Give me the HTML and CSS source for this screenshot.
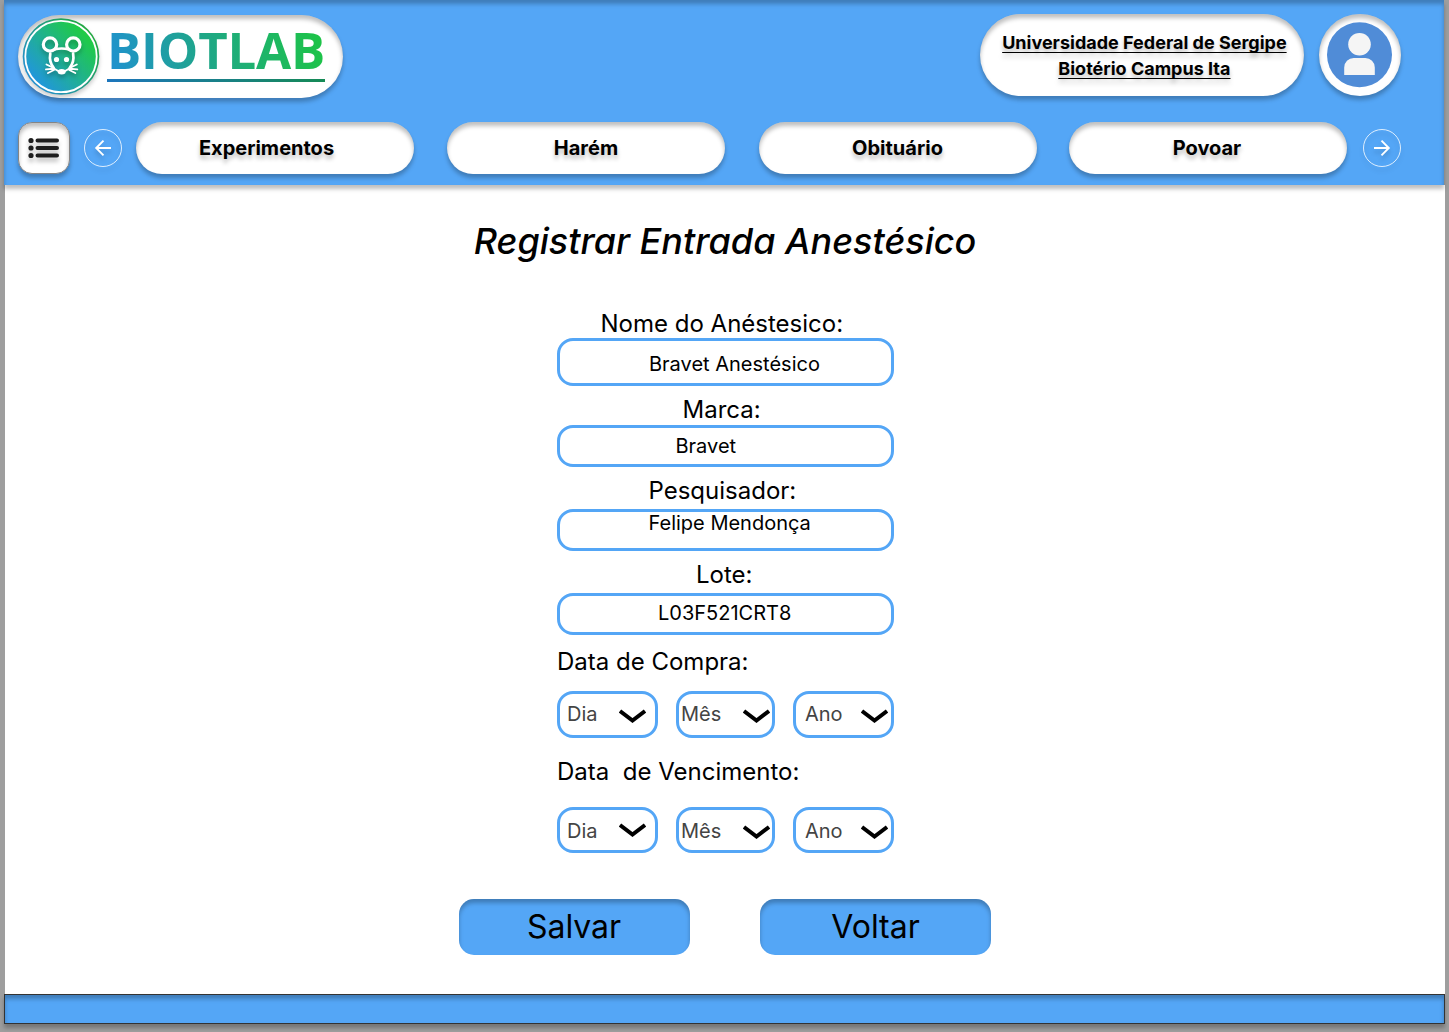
FILE: index.html
```html
<!DOCTYPE html>
<html lang="pt-BR">
<head>
<meta charset="utf-8">
<title>Biotlab - Registrar Entrada Anestésico</title>
<link rel="stylesheet" href="styles.css">
</head>
<body>
<header class="header">
  <div class="header-top">
    <div class="logo pill">
      <svg class="logo-mark" width="80" height="80" viewBox="0 0 80 80">
        <defs>
          <linearGradient id="mark" x1="0.15" y1="0.85" x2="0.85" y2="0.2">
            <stop offset="0" stop-color="#2196dc"/>
            <stop offset="1" stop-color="#1fcb45"/>
          </linearGradient>
          <linearGradient id="ring" x1="0.1" y1="0.8" x2="0.9" y2="0.2">
            <stop offset="0" stop-color="#2590cf"/>
            <stop offset="1" stop-color="#22a840"/>
          </linearGradient>
        </defs>
        <circle cx="40" cy="39.500" r="38.300" fill="url(#ring)"/>
        <circle cx="40" cy="39.500" r="35.700" fill="url(#mark)" stroke="#fff" stroke-width="1.800"/>
        <g class="mouse" fill="none" stroke="#fff" stroke-width="2.100" stroke-linecap="round">
          <path d="M34 32.300q6.700-1.600 13.400 0M29.300 36.500c-.9 5-.2 10 3.500 14.500M52.100 36.500c.9 5 .2 10-3.500 14.500" stroke-width="2.700"/>
          <circle cx="29" cy="27.500" r="6.700" stroke-width="3.200"/>
          <circle cx="52.300" cy="27.500" r="6.700" stroke-width="3.200"/>
          <path d="M25.500 47.500l7 3.300M25 52.400l7.500-.6M27 56l6-3M55.800 47.500l-7 3.300M56.300 52.400l-7.500-.6M54.300 56l-6-3M33 51.500l5 3M48.300 51.500l-5 3" stroke-width="1.900"/>
          <ellipse cx="40.700" cy="54.700" rx="4" ry="2.700" fill="#fff" stroke="none"/>
          <circle cx="35.500" cy="42.500" r="2.600" fill="#fff" stroke="none"/>
          <circle cx="45.500" cy="42.500" r="2.600" fill="#fff" stroke="none"/>
        </g>
      </svg>
      <span class="logo-name">BIOTLAB</span>
    </div>
    <div class="institution pill">
      <span>Universidade Federal de Sergipe</span>
      <span>Biotério Campus Ita</span>
    </div>
    <div class="avatar pill">
      <svg width="66" height="66" viewBox="0 0 66 66">
        <circle cx="32.500" cy="32.800" r="32.500" fill="#508cd7"/>
        <circle cx="32.500" cy="22.300" r="11.300" fill="#f5f5f5"/>
        <path d="M17.200 52.900V45.500a9.500 9.500 0 0 1 9.500-9.500h11.600a9.500 9.500 0 0 1 9.500 9.500V52.900z" fill="#f5f5f5"/>
      </svg>
    </div>
  </div>
  <nav class="nav">
    <a class="menu">
      <svg width="32" height="22" viewBox="0 0 32 22" stroke="#1e1e1e" stroke-width="4" stroke-linecap="round">
        <path d="M9.500 3.500H29M9.500 11H29M9.500 18.500H29"/>
        <path d="M3 3.500h.01M3 11h.01M3 18.500h.01" stroke-width="5.200"/>
      </svg>
    </a>
    <a class="arrow arrow-prev">
      <svg width="38" height="38" viewBox="0 0 38 38" fill="none" stroke="#fff">
        <circle cx="19" cy="19" r="18.500" stroke-opacity=".8"/>
        <path d="M27 19H12.500M19.500 11.700L12.200 19l7.300 7.300" stroke-width="1.900"/>
      </svg>
    </a>
    <a class="tab pill tab-first"><span>Experimentos</span></a>
    <a class="tab pill tab-harem"><span>Harém</span></a>
    <a class="tab pill tab-obituary"><span>Obituário</span></a>
    <a class="tab pill tab-last"><span>Povoar</span></a>
    <a class="arrow arrow-next">
      <svg width="38" height="38" viewBox="0 0 38 38" fill="none" stroke="#fff">
        <circle cx="19" cy="19" r="18.500" stroke-opacity=".8"/>
        <path d="M11 19h14.500M18.500 11.700l7.300 7.300-7.300 7.300" stroke-width="1.900"/>
      </svg>
    </a>
  </nav>
</header>

<main class="main">
  <h1 class="title">Registrar Entrada Anestésico</h1>
  <form class="form">
    <label class="label label-name">Nome do Anéstesico:</label>
    <div class="field field-name">Bravet Anestésico</div>
    <label class="label label-brand">Marca:</label>
    <div class="field field-brand">Bravet</div>
    <label class="label label-researcher">Pesquisador:</label>
    <div class="field field-researcher">Felipe Mendonça</div>
    <label class="label label-batch">Lote:</label>
    <div class="field field-batch">L03F521CRT8</div>

    <label class="label label-purchase">Data de Compra:</label>
    <div class="date">
      <div class="select day">Dia<svg class="chevron" viewBox="0 0 27 14"><path d="M1 2l12.500 9.500L26 2"/></svg></div>
      <div class="select month">Mês<svg class="chevron" viewBox="0 0 27 14"><path d="M1 2l12.500 9.500L26 2"/></svg></div>
      <div class="select year">Ano<svg class="chevron" viewBox="0 0 27 14"><path d="M1 2l12.500 9.500L26 2"/></svg></div>
    </div>
    <label class="label label-expiry">Data  de Vencimento:</label>
    <div class="date date-expiry">
      <div class="select day">Dia<svg class="chevron" viewBox="0 0 27 14"><path d="M1 2l12.500 9.500L26 2"/></svg></div>
      <div class="select month">Mês<svg class="chevron" viewBox="0 0 27 14"><path d="M1 2l12.500 9.500L26 2"/></svg></div>
      <div class="select year">Ano<svg class="chevron" viewBox="0 0 27 14"><path d="M1 2l12.500 9.500L26 2"/></svg></div>
    </div>
  </form>
  <div class="actions">
    <a class="button save">Salvar</a>
    <a class="button back">Voltar</a>
  </div>
</main>
<footer class="footer"></footer>
</body>
</html>
```
FILE: styles.css
```css
* { box-sizing: border-box; }

body {
  margin: 0;
  width: 1449px;
  height: 1032px;
  overflow: hidden;
  background: #9e9e9e;
  font-family: Inter, "Liberation Sans", sans-serif;
  color: #000;
}

svg { display: block; flex: none; }

.header {
  position: relative;
  width: 1440px;
  height: 185px;
  margin-left: 4px;
  background: #54a6f6;
  box-shadow: 0 4px 4px rgba(0, 0, 0, .25), inset 0 4px 4px rgba(0, 0, 0, .25);
}

.pill {
  background: #fff;
  border-radius: 42px;
  box-shadow: 0 4px 4px rgba(0, 0, 0, .25), inset 0 4px 4px rgba(0, 0, 0, .25);
}

.header-top {
  display: flex;
  align-items: flex-start;
  height: 122px;
  padding: 14px 0 0 14px;
}

.logo {
  display: flex;
  width: 325px;
  height: 83px;
  margin-top: 1px;
  padding: 2px 0 0 3px;
}

.mouse { filter: drop-shadow(0 3px 2px rgba(0, 0, 0, .25)); }
.logo-mark { filter: drop-shadow(0 3px 2px rgba(0, 0, 0, .2)); }

.logo-name {
  width: 218px;
  height: 65px;
  margin-left: 6px;
  background:
    linear-gradient(90deg, #1d76bd, #158a55) bottom / 100% 3px no-repeat border-box,
    linear-gradient(75deg, #2090d4, #1fa688 45%, #1dc642) text;
  color: transparent;
  font: 700 51px/64px "Open Sans", sans-serif;
  letter-spacing: -.2px;
  white-space: nowrap;
}

.institution {
  display: flex;
  flex-direction: column;
  align-items: center;
  width: 324px;
  height: 82px;
  margin-left: 637.400px;
  padding: 16px 0 0 4px;
  font-size: 18px;
  font-weight: 700;
  line-height: 26px;
  text-shadow: 0 4px 4px rgba(0, 0, 0, .25);
}
.institution span {
  text-decoration: underline;
  text-decoration-thickness: 1px;
  text-underline-offset: 3px;
  text-decoration-skip-ink: none;
}

.avatar {
  width: 82px;
  height: 82px;
  margin-left: 15px;
  padding: 8px;
}

.nav { display: flex; align-items: flex-start; padding-left: 14px; }

.menu {
  width: 52px;
  height: 52px;
  padding: 14px 0 0 9px;
  border: 1px solid #858585;
  border-radius: 14px;
  background: #fff;
  box-shadow: 0 4px 4px rgba(0, 0, 0, .25), inset 0 4px 4px rgba(0, 0, 0, .25);
}
.menu svg { filter: drop-shadow(0 4px 2px rgba(0, 0, 0, .25)); }

.arrow { margin-top: 7px; filter: drop-shadow(0 4px 2px rgba(0, 0, 0, .15)); }
.arrow-prev { margin-left: 14px; margin-right: 14px; }
.arrow-next { margin-left: 16px; }

.tab {
  display: flex;
  align-items: center;
  justify-content: center;
  width: 278px;
  height: 52px;
  margin-right: 33px;
  border-radius: 26px;
  font-size: 20px;
  font-weight: 700;
  text-shadow: 0 4px 4px rgba(0, 0, 0, .25);
}
.tab-first { padding-right: 17px; }
.tab-harem { margin-right: 34px; }
.tab-obituary { margin-right: 32px; padding-right: 1px; }
.tab-last { margin-right: 0; padding-right: 2px; }

.main {
  width: 1440px;
  height: 809px;
  margin-left: 5px;
  padding-top: 33px;
  background: #fff;
}

.title {
  margin: 0;
  height: 46px;
  font-size: 36px;
  font-weight: 500;
  font-style: italic;
  line-height: 46px;
  text-align: center;
}

.form { width: 337px; margin: 45px 0 0 552px; }

.label {
  display: block;
  height: 29px;
  font-size: 24px;
  line-height: 29px;
  white-space: pre;
}
.label-name { padding-left: 43.500px; }
.label-brand { margin: 9px 0 1px; padding-left: 125.500px; }
.label-researcher { margin: 9px 0 4px; padding-left: 91.500px; }
.label-batch { margin: 9px 0 4px; padding-left: 139px; }
.label-purchase { margin: 12px 0 15px; }
.label-expiry { margin: 19px 0 21px; }

.field {
  height: 42px;
  border: 3px solid #54a6f6;
  border-radius: 16px;
  font-size: 20px;
  line-height: 36px;
}
.field-name { height: 48px; padding: 5px 0 0 89px; }
.field-brand { padding-left: 115.500px; }
.field-researcher { padding-left: 88.500px; line-height: 22px; }
.field-batch { padding-left: 98px; line-height: 34px; }

.date { display: flex; justify-content: space-between; height: 47px; }
.date-expiry { height: 46px; }

.select {
  display: flex;
  justify-content: space-between;
  width: 101px;
  border: 3px solid #54a6f6;
  border-radius: 16px;
  color: #444;
  font-size: 20px;
  line-height: 40px;
}
.day { padding: 0 9px 0 7px; }
.month { width: 99px; padding: 0 2px; }
.year { padding: 0 3px 0 9px; }
.date-expiry .select { line-height: 42px; }

.chevron {
  width: 27px;
  height: 14px;
  margin-top: 15px;
  fill: none;
  stroke: #000;
  stroke-width: 4;
}
.date-expiry .day .chevron { margin-top: 13px; }

.actions { display: flex; gap: 70px; margin: 46px 0 0 454px; }
.button {
  width: 231px;
  height: 56px;
  border-radius: 15px;
  background: #54a6f6;
  box-shadow: inset 0 4px 4px rgba(0, 0, 0, .25);
  font-size: 32px;
  line-height: 56px;
  text-align: center;
}
.save { padding-right: 1px; }

.footer {
  width: 1441px;
  height: 30px;
  margin-left: 4px;
  border: 1px solid #333;
  background: #54a6f6;
  box-shadow: 0 4px 4px rgba(0, 0, 0, .25), inset 0 4px 4px rgba(0, 0, 0, .25);
}
```
